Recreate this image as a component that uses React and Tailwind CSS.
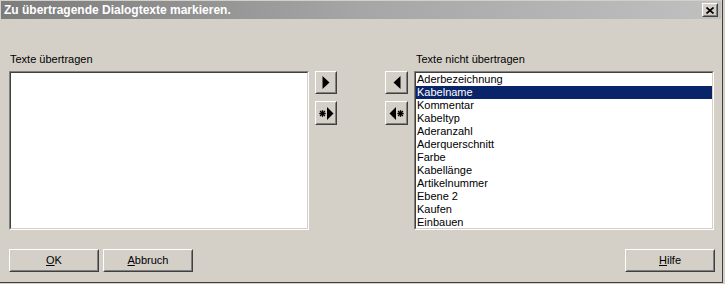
import React from "react";

function Raised({ className = "", innerClassName = "", children }) {
  return (
    <div className={"border border-t-white border-l-white border-b-[#404040] border-r-[#404040] bg-[#d4d0c8] " + className}>
      <div className={"w-full h-full border border-t-[#d4d0c8] border-l-[#d4d0c8] border-b-[#808080] border-r-[#808080] flex items-center justify-center " + innerClassName}>
        {children}
      </div>
    </div>
  );
}

function Sunken({ className = "", children }) {
  return (
    <div className={"border border-t-[#808080] border-l-[#808080] border-b-white border-r-white " + className}>
      <div className="w-full h-full border border-t-[#404040] border-l-[#404040] border-b-[#d4d0c8] border-r-[#d4d0c8] bg-white overflow-hidden">
        {children}
      </div>
    </div>
  );
}

const Star = ({ x }) => (
  <g stroke="black" strokeWidth="1.4">
    <line x1={x - 3.2} y1="6.5" x2={x + 3.2} y2="6.5" />
    <line x1={x} y1="3.2" x2={x} y2="9.8" />
    <line x1={x - 2.4} y1="4.1" x2={x + 2.4} y2="8.9" />
    <line x1={x + 2.4} y1="4.1" x2={x - 2.4} y2="8.9" />
  </g>
);

const items = [
  "Aderbezeichnung",
  "Kabelname",
  "Kommentar",
  "Kabeltyp",
  "Aderanzahl",
  "Aderquerschnitt",
  "Farbe",
  "Kabellänge",
  "Artikelnummer",
  "Ebene 2",
  "Kaufen",
  "Einbauen",
];

function BottomButton({ letter, rest, className = "" }) {
  return (
    <Raised className={"w-[90px] h-[23px] " + className}>
      <span className="leading-[13px]">
        <span className="underline underline-offset-[1px]">{letter}</span>
        {rest}
      </span>
    </Raised>
  );
}

export default function App() {
  return (
    <div className="w-[725px] h-[284px] bg-[#d4d0c8] font-['Liberation_Sans',Arial,sans-serif] text-[11px] text-black overflow-hidden">
      <div className="w-[723px] h-[283px] border-r border-b border-[#404040] flex flex-col">
        {/* title bar */}
        <div className="mx-[1px] mt-[1px] h-[18px] flex items-center justify-between bg-gradient-to-r from-[#7c7c7c] via-[#a6a6a6] to-[#c0c0c0] pl-[3px] pr-[3px]">
          <span className="font-bold text-white text-[12px] leading-[14px]">
            Zu übertragende Dialogtexte markieren.
          </span>
          <Raised className="w-[16px] h-[14px]">
            <svg width="8" height="7" viewBox="0 0 8 7">
              <path d="M0.5 0.5 L7.5 6.5 M7.5 0.5 L0.5 6.5" stroke="black" strokeWidth="1.7" />
            </svg>
          </Raised>
        </div>

        {/* main row */}
        <div className="flex mt-[34px] pl-[9px]">
          <div className="w-[300px] flex flex-col">
            <div className="h-[13px] leading-[13px] pl-[1px]">Texte übertragen</div>
            <Sunken className="mt-[5px] h-[159px]" />
          </div>

          <div className="ml-[6px] mt-[18px] flex flex-col gap-[7px]">
            <Raised className="w-[22px] h-[23px]">
              <svg width="8" height="13" viewBox="0 0 8 13">
                <polygon points="0.5,0 7.5,6.5 0.5,13" fill="black" />
              </svg>
            </Raised>
            <Raised className="w-[22px] h-[24px]">
              <svg width="15" height="13" viewBox="0 0 15 13">
                <Star x={3.5} />
                <polygon points="8,0 14.5,6.5 8,13" fill="black" />
              </svg>
            </Raised>
          </div>

          <div className="ml-[48px] mt-[18px] flex flex-col gap-[7px]">
            <Raised className="w-[23px] h-[23px]">
              <svg width="8" height="13" viewBox="0 0 8 13">
                <polygon points="7.5,0 0.5,6.5 7.5,13" fill="black" />
              </svg>
            </Raised>
            <Raised className="w-[23px] h-[24px]">
              <svg width="15" height="13" viewBox="0 0 15 13">
                <polygon points="7,0 0.5,6.5 7,13" fill="black" />
                <Star x={11.5} />
              </svg>
            </Raised>
          </div>

          <div className="ml-[6px] w-[300px] flex flex-col">
            <div className="h-[13px] leading-[13px] pl-[2px]">Texte nicht übertragen</div>
            <Sunken className="mt-[5px] h-[159px]">
              <div className="flex flex-col">
                {items.map((it, i) => (
                  <div
                    key={it}
                    className={
                      "h-[13px] leading-[13px] pl-[1px] whitespace-nowrap " +
                      (i === 1 ? "bg-[#0a246a] text-white" : "")
                    }
                  >
                    {it}
                  </div>
                ))}
              </div>
            </Sunken>
          </div>
        </div>

        {/* bottom buttons */}
        <div className="flex mt-[19px] pl-[9px] pr-[7px]">
          <BottomButton letter="O" rest="K" />
          <BottomButton letter="A" rest="bbruch" className="ml-[4px]" />
          <div className="flex-1" />
          <BottomButton letter="H" rest="ilfe" />
        </div>
      </div>
    </div>
  );
}
